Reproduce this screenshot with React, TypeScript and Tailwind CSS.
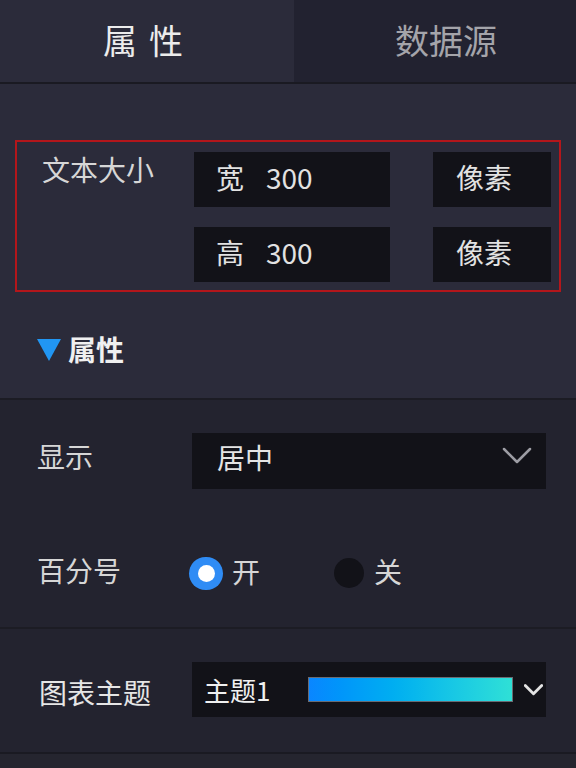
import { ReactNode } from 'react'

const font = { fontFamily: '"Noto Sans CJK SC", "Noto Sans", sans-serif' }

function Box({ children, className = '' }: { children: ReactNode; className?: string }) {
  return (
    <div className={`h-[55px] bg-[#121218] flex items-center text-[28px] leading-none text-[#e2e2e2] pb-[6px] ${className}`}>
      {children}
    </div>
  )
}

function Chevron({ className = '', width = 2.5 }: { className?: string; width?: number }) {
  return (
    <svg viewBox="0 0 30 18" className={className} fill="none">
      <path d="M2 2 L15 15 L28 2" stroke="currentColor" strokeWidth={width} strokeLinecap="round" strokeLinejoin="round" />
    </svg>
  )
}

export default function App() {
  return (
    <div style={font} className="w-[576px] h-[768px] overflow-hidden bg-[#23232f] text-[#d6d6d6]">
      {/* tabs */}
      <div className="flex h-[84px] border-b-2 border-[#1a1a22]">
        <div className="w-[294px] bg-[#2b2b3a] flex items-center justify-center pr-[8px] pl-[12px] pb-[4px] text-[34px] text-[#ececec] tracking-[12px]">
          属性
        </div>
        <div className="flex-1 bg-[#222230] flex items-center justify-center pl-[22px] pb-[4px] text-[34px] text-[#a4a4aa]">
          数据源
        </div>
      </div>

      {/* size section */}
      <div className="bg-[#2b2b3a] h-[314px] pt-[56px]">
        <div className="mx-[15px] h-[152px] border-2 border-[#b3161b] pt-[10px] pl-[25px] pr-[8px]">
          <div className="grid grid-cols-[152px_196px_1fr_118px] gap-y-[20px]">
            <div className="text-[28px] leading-[40px] text-[#d6d6d6] -mt-[3px]">文本大小</div>
            <Box className="pl-[22px]">
              <span>宽</span>
              <span className="ml-[22px]">300</span>
            </Box>
            <div />
            <Box className="pl-[23px]">像素</Box>
            <div />
            <Box className="pl-[22px]">
              <span>高</span>
              <span className="ml-[22px]">300</span>
            </Box>
            <div />
            <Box className="pl-[23px]">像素</Box>
          </div>
        </div>
        <div className="h-[106px] flex items-center pl-[37px] pt-[8px]">
          <svg viewBox="0 0 24 24" className="w-[24px] h-[24px] mt-[2px]">
            <path d="M0 1 H24 L12 23 Z" fill="#2196f3" />
          </svg>
          <span className="ml-[7px] text-[28px] font-bold text-[#f0f0f0]">属性</span>
        </div>
      </div>

      {/* display section */}
      <div className="h-[229px] border-t-2 border-[#1c1c24] pl-[37px]">
        <div className="flex items-center mt-[33px]">
          <div className="w-[155px] shrink-0 text-[28px] leading-none pb-[10px]">显示</div>
          <div className="w-[354px] shrink-0 h-[56px] bg-[#121218] flex items-center pl-[25px] pr-[14px] text-[28px] leading-none text-[#e4e4e4]">
            <span className="flex-1 pb-[8px]">居中</span>
            <Chevron className="w-[30px] h-[18px] text-[#9d9da4] mb-[10px]" />
          </div>
        </div>
        <div className="flex items-center mt-[67px]">
          <div className="w-[152px] shrink-0 text-[28px] leading-none pb-[6px]">百分号</div>
          <div className="w-[34px] h-[33px] rounded-full bg-[#2f8cf5] flex items-center justify-center">
            <div className="w-[17px] h-[17px] rounded-full bg-white" />
          </div>
          <span className="ml-[9px] text-[28px] leading-none pb-[4px]">开</span>
          <div className="ml-[74px] w-[30px] h-[30px] rounded-full bg-[#121218]" />
          <span className="ml-[10px] text-[28px] leading-none pb-[4px]">关</span>
        </div>
      </div>

      {/* theme section */}
      <div className="h-[125px] border-t-2 border-[#1c1c24] pl-[39px] pt-[33px]">
        <div className="flex items-center">
          <div className="w-[153px] shrink-0 text-[28px] text-[#e6e6e6] mt-[4px]">图表主题</div>
          <div className="w-[354px] shrink-0 h-[55px] bg-[#121218] flex items-center pl-[12px] text-[26px] text-[#f0f0f0]">
            <span className="w-[104px]">主题1</span>
            <div className="w-[205px] h-[25px] border border-[#6b6b72] bg-gradient-to-r from-[#0a86ff] to-[#2fe0d6]" />
            <Chevron width={4.5} className="ml-[11px] w-[19px] h-[12px] text-[#e4e4e4]" />
          </div>
        </div>
      </div>

      <div className="h-[16px] border-t-2 border-[#1a1a22] bg-[#25252f]" />
    </div>
  )
}
